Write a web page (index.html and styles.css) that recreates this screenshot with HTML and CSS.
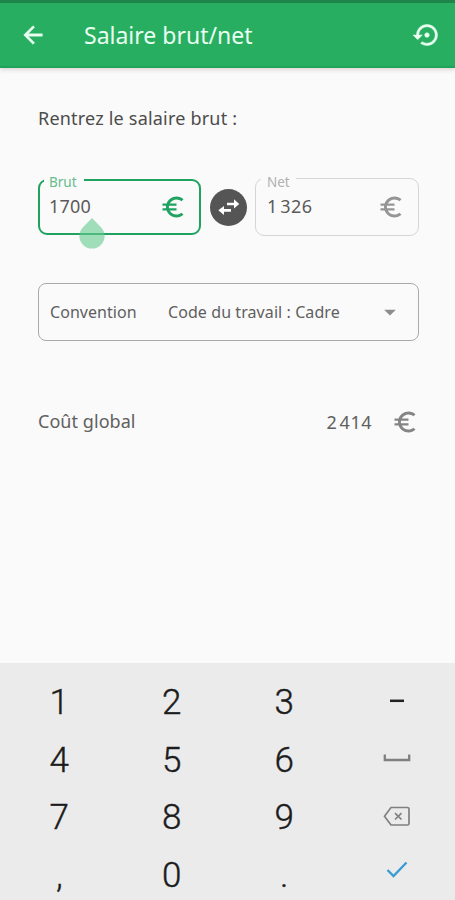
FILE: index.html
```html
<!DOCTYPE html>
<html lang="fr">
<head>
<meta charset="utf-8">
<title>Salaire brut/net</title>
<link rel="stylesheet" href="styles.css">
</head>
<body>
<svg class="defs" width="0" height="0" aria-hidden="true">
  <symbol id="euro" viewBox="0 0 24 24"><path d="M15 18.5c-2.51 0-4.68-1.42-5.76-3.5H15v-2H8.58c-.05-.33-.08-.66-.08-1s.03-.67.08-1H15V9H9.24C10.32 6.92 12.5 5.5 15 5.5c1.61 0 3.09.59 4.23 1.57L21 5.3C19.41 3.87 17.3 3 15 3c-3.92 0-7.24 2.51-8.48 6H3v2h3.06c-.04.33-.06.66-.06 1s.02.67.06 1H3v2h3.52c1.24 3.49 4.56 6 8.48 6 2.31 0 4.41-.87 6-2.3l-1.78-1.77c-1.13.98-2.6 1.57-4.22 1.57z"/></symbol>
</svg>
<header class="bar">
  <svg class="icon" viewBox="0 0 24 24"><path d="M20 11H7.83l5.59-5.59L12 4l-8 8 8 8 1.41-1.41L7.83 13H20v-2z"/></svg>
  <h1 class="title">Salaire brut/net</h1>
  <svg class="icon restore" viewBox="0 0 24 24"><path d="M14 12c0-1.1-.9-2-2-2s-2 .9-2 2 .9 2 2 2 2-.9 2-2zm-2-9c-4.97 0-9 4.03-9 9H0l4 4 4-4H5c0-3.87 3.13-7 7-7s7 3.13 7 7-3.13 7-7 7c-1.51 0-2.91-.49-4.06-1.3l-1.42 1.44C8.04 20.3 9.94 21 12 21c4.97 0 9-4.03 9-9s-4.03-9-9-9z"/></svg>
</header>
<main class="content">
  <p class="prompt">Rentrez le salaire brut :</p>
  <div class="fields">
    <div class="field active">
      <span class="label">Brut</span>
      <span class="value gross">1700</span>
      <svg class="icon" viewBox="0 0 24 24"><use href="#euro"/></svg>
      <svg class="handle" viewBox="0 0 26 31"><path d="M13 0L22 9.2A12.6 12.6 0 1 1 4 9.2Z"/></svg>
    </div>
    <div class="swap"><svg class="icon" viewBox="0 0 28 28"><path d="M12 9.700h7V6.200L24.200 11 19 15.600v-3.300H12zM16 18.700H9v3.200L3.300 17.300 9 12.900v3.200h7z"/></svg></div>
    <div class="field">
      <span class="label">Net</span>
      <span class="value net">1 326</span>
      <svg class="icon" viewBox="0 0 24 24"><use href="#euro"/></svg>
    </div>
  </div>
  <div class="select">
    <span class="select-name">Convention</span>
    <span class="select-value">Code du travail : Cadre</span>
    <svg class="icon" viewBox="0 0 24 24"><path d="M7 10l5 5 5-5z"/></svg>
  </div>
  <div class="total">
    <span class="total-name">Coût global</span>
    <span class="total-value">2 414</span>
    <svg class="icon" viewBox="0 0 24 24"><use href="#euro"/></svg>
  </div>
</main>
<section class="keyboard">
  <span>1</span><span>2</span><span>3</span>
  <svg viewBox="0 0 28 28"><path class="minus" d="M7 12.800h14"/></svg>
  <span>4</span><span>5</span><span>6</span>
  <svg viewBox="0 0 28 28"><path class="outline" d="M1.800 8.500v5.500h24.400V8.500"/></svg>
  <span>7</span><span>8</span><span>9</span>
  <svg viewBox="0 0 28 28"><path class="outline thin" d="M8 3.500H24.500Q26 3.500 26 5V19.500Q26 21 24.500 21H8L1.500 12.250ZM12 9.200l6.500 6.300M18.500 9.200l-6.500 6.300"/></svg>
  <span>,</span><span>0</span><span>.</span>
  <svg viewBox="0 0 28 28"><path class="check" d="M4.500 9l6 6L23.500 1.500"/></svg>
</section>
</body>
</html>
```
FILE: styles.css
```css
* { box-sizing: border-box; }
body {
  margin: 0;
  height: 900px;
  display: flex;
  flex-direction: column;
  overflow: hidden;
  background: #fafafa;
  color: #606060;
  font-family: "Noto Sans", sans-serif;
}
.defs { position: absolute; }
.icon { width: 28px; height: 28px; flex: none; fill: currentColor; }
.bar {
  display: flex;
  align-items: center;
  height: 68px;
  padding: 1px 14px 0 19px;
  border-top: 3px solid #1d8549;
  border-bottom: 2px solid #1fa35a;
  background: #27ae60;
  color: #e9fff1;
  box-shadow: 0 1px 5px rgba(80, 30, 30, .22);
}
.bar .icon { stroke: currentColor; stroke-width: .4; }
.title {
  flex: 1;
  margin: 0 0 0 37px;
  font-size: 23px;
  line-height: 32px;
  font-weight: 400;
}
.content { flex: 1; padding: 36px 36px 0 38px; }
.prompt { margin: 0; font-size: 18px; line-height: 28px; letter-spacing: .2px; color: #4c4c4c; }
.fields { display: flex; align-items: center; margin-top: 46px; height: 58px; }
.field {
  position: relative;
  display: flex;
  align-items: center;
  justify-content: space-between;
  width: 164px;
  height: 58px;
  padding: 0 13px 0 12px;
  border: 1px solid #d5d5d5;
  border-radius: 9px;
  color: #959595;
}
.active { width: 163px; height: 56px; padding: 0 12px 0 9px; border: 2px solid #20a360; color: #20a360; }
.label {
  position: absolute;
  top: -6px;
  left: 5px;
  padding: 0 6px;
  background: #fafafa;
  font-size: 13.500px;
  line-height: 18px;
  color: #b0b0b0;
}
.active .label { left: 4px; top: -8px; padding: 0 7px 0 5px; color: #65bd8d; }
.value { margin-bottom: 2px; font-size: 18px; line-height: 26px; color: #5a5a5a; }
.gross { letter-spacing: .2px; }
.net { margin-left: -1px; letter-spacing: .4px; word-spacing: -2.500px; }
.handle { position: absolute; left: 39px; top: 37px; width: 26px; height: 31px; fill: #65ca8f; opacity: .6; }
.swap {
  display: grid;
  place-items: center;
  width: 37px;
  height: 37px;
  margin: 0 8px 0 9px;
  border-radius: 50%;
  background: #555;
  color: #fff;
}
.select {
  display: flex;
  align-items: center;
  height: 58px;
  margin-top: 47px;
  padding: 0 14px 0 11px;
  width: 381px;
  border: 1px solid #aaa;
  border-radius: 8px;
  font-size: 16px;
}
.select .icon { color: #8c8c8c; }
.select-name { width: 118px; letter-spacing: .05px; }
.select-value { flex: 1; letter-spacing: .08px; }
.total { display: flex; align-items: center; margin-top: 66px; width: 381px; height: 30px; }
.total-name { flex: 1; margin-bottom: 2px; font-size: 18px; letter-spacing: .05px; }
.total-value { margin-right: 19px; font-size: 18px; letter-spacing: .5px; word-spacing: -2.800px; }
.total .icon { color: #858585; }
.keyboard {
  display: grid;
  grid-template-columns: repeat(4, 1fr);
  grid-template-rows: repeat(4, 57.700px);
  place-items: center;
  height: 237px;
  padding: 10.500px 2px 0 3px;
  background: #ebebeb;
  color: #1c1c1c;
  font: 300 35px/57px Roboto, sans-serif;
  -webkit-text-stroke: .4px #1c1c1c;
  overflow: hidden;
}
.keyboard svg { width: 28px; height: 28px; fill: none; }
.minus { stroke: #222; stroke-width: 2.500; }
.outline { stroke: #808080; stroke-width: 2.300; }
.thin { stroke-width: 1.700; }
.check { stroke: #399bd3; stroke-width: 2.300; }
```
